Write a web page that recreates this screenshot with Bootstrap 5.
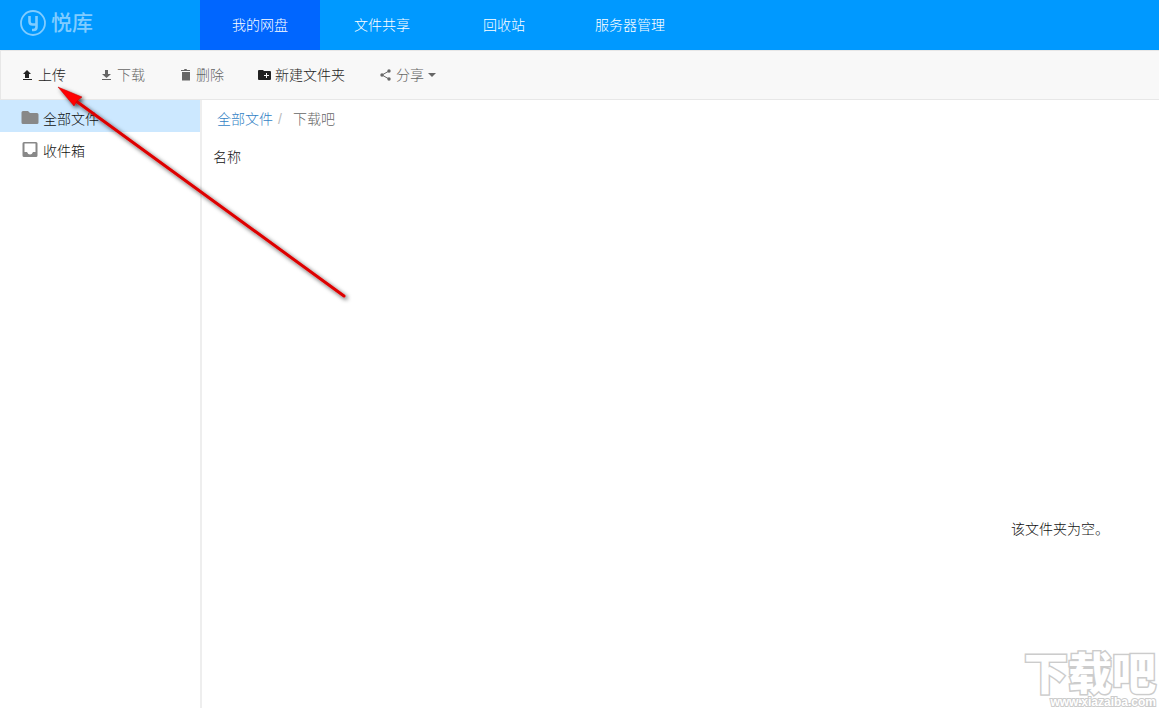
<!DOCTYPE html>
<html lang="zh-CN">
<head>
<meta charset="utf-8">
<meta name="viewport" content="width=device-width, initial-scale=1">
<title>悦库网盘</title>
<link rel="stylesheet" href="https://cdn.jsdelivr.net/npm/bootstrap@5.3.0/dist/css/bootstrap.min.css">
<style>
  body { font: 300 14px/20px "Liberation Sans", "Noto Sans CJK SC", sans-serif; color: #111; background: #fff; }
  .top-bar { background: #09f; height: 50px; }
  .side-col { width: 200px; }
  .brand { color: #80ccff; font-size: 21px; font-weight: 500; padding: 0 0 4px 19px; gap: 5px; }
  .brand:hover { color: #80ccff; }
  .top-nav { gap: 2px; }
  .top-nav .nav-link { min-width: 120px; height: 50px; padding: 15px 29px; color: #fff; text-align: center; }
  .top-nav .nav-link.active { background: #06f; }
  .tool-bar { height: 50px; background: #f8f8f8; border: 1px solid #e7e7e7; border-right: 0; padding-left: 20px; gap: 34px; }
  .tool-bar .btn { font: inherit; color: #222; border: 0; gap: 4px; line-height: 20px; }
  .tool-bar .btn.muted { color: #666; }
  .tool-bar svg { fill: currentColor; }
  .tool-bar .dropdown-toggle::after { margin-left: 0; vertical-align: 0; border-width: 4px 4px 0; }
  .side-list { border-right: 2px solid #eee; width: 202px; }
  .side-list .nav-link { height: 32px; padding: 6px 21px 0; gap: 4px; color: #111; }
  .side-list svg { margin-bottom: 2px; }
  .side-list .nav-link.active { background: #cce8ff; }
  .crumbs { padding: 9px 15px; }
  .crumbs a { color: #337fc5; }
  .crumbs .breadcrumb-item.active { color: #666; }
  .crumbs .breadcrumb-item + .breadcrumb-item { padding-left: 5px; }
  .crumbs .breadcrumb-item + .breadcrumb-item::before { color: #bbb; padding-right: 11px; }
  .file-head th { font-weight: 300; padding: 9px 11px; }
  .empty-note { padding: 0 50px 169px 0; }
  .pointer { left: 50px; top: 80px; pointer-events: none; }
  .site-mark { right: 3px; bottom: 0; color: #fff; font-weight: 900; text-align: right; pointer-events: none; -webkit-text-stroke: 3px #ccc; paint-order: stroke fill; }
  .site-mark .name { font-size: 44px; line-height: 42px; }
  .site-mark .host { font-size: 12px; line-height: 12px; -webkit-text-stroke-width: 2px; }
</style>
</head>
<body class="d-flex flex-column vh-100 overflow-hidden position-relative">
<header class="top-bar d-flex flex-shrink-0">
  <a href="#" class="brand side-col d-flex align-items-center text-decoration-none">
    <svg width="27" height="27" viewBox="0 0 27 27" fill="none" stroke="currentColor" stroke-width="1.800" aria-hidden="true">
      <circle cx="14" cy="13" r="12"/>
      <path d="M10.500 6v5.500q0 3 3 3H17M17.500 6v11q0 3-3 3H13" stroke-width="2.600"/>
    </svg>
    <span>悦库</span>
  </a>
  <nav class="nav top-nav flex-nowrap text-nowrap">
    <a class="nav-link active" href="#">我的网盘</a>
    <a class="nav-link" href="#">文件共享</a>
    <a class="nav-link" href="#">回收站</a>
    <a class="nav-link" href="#">服务器管理</a>
  </nav>
</header>

<div class="tool-bar d-flex align-items-center flex-shrink-0" role="toolbar">
  <button type="button" class="btn p-0 d-flex align-items-center">
    <svg width="13" height="12" viewBox="0 0 13 12"><path d="M6 1l4 4H8v4H4V5H2zM2 10h9v1H2z"/></svg>上传</button>
  <button type="button" class="btn p-0 d-flex align-items-center muted">
    <svg width="13" height="12" viewBox="0 0 13 12"><path d="M5 1h3v4h3L6.500 9 2 5h3zM2 10h9v1H2z"/></svg>下载</button>
  <button type="button" class="btn p-0 d-flex align-items-center muted">
    <svg width="13" height="12" viewBox="0 0 13 12"><path d="M2 1h3l.5-1h2L8 1h3v1H2zM3 3h8v8.500H3z"/></svg>删除</button>
  <button type="button" class="btn p-0 d-flex align-items-center">
    <svg width="13" height="12" viewBox="0 0 13 12"><path fill-rule="evenodd" d="M1 1h4l1 1h6q1 0 1 1v7q0 1-1 1H1q-1 0-1-1V2q0-1 1-1zM8 4v2H6v1h2v2h1V7h2V6H9V4z"/></svg>新建文件夹</button>
  <button type="button" class="btn p-0 d-flex align-items-center muted dropdown-toggle" data-bs-toggle="dropdown">
    <svg width="13" height="12" viewBox="0 0 13 12"><path d="M10 2L3 6l7 4" fill="none" stroke="currentColor"/><circle cx="10" cy="2" r="1.700"/><circle cx="3" cy="6" r="1.700"/><circle cx="10" cy="10" r="1.700"/></svg>分享</button>
</div>

<div class="d-flex flex-grow-1">
  <nav class="side-list nav flex-column flex-shrink-0">
    <a class="nav-link active d-flex align-items-center" href="#">
      <svg width="18" height="16" viewBox="0 0 18 16" fill="#888"><path d="M2 1h5l2 2h7q1.500 0 1.500 1.500v8q0 1.500-1.500 1.500H2Q.5 14 .5 12.500v-10Q.5 1 2 1z"/></svg>全部文件</a>
    <a class="nav-link d-flex align-items-center" href="#">
      <svg width="18" height="16" viewBox="0 0 18 16" fill="#888"><path fill-rule="evenodd" d="M3 0h12q1.500 0 1.500 1.500v12Q16.500 15 15 15H3q-1.500 0-1.500-1.500v-12Q1.500 0 3 0zM3.500 1.500V10h2.500q1 2.500 3 2.500t3-2.500h2.500V1.500z"/></svg>收件箱</a>
  </nav>
  <main class="d-flex flex-column flex-grow-1">
    <ol class="breadcrumb crumbs mb-0">
      <li class="breadcrumb-item"><a href="#" class="text-decoration-none">全部文件</a></li>
      <li class="breadcrumb-item active">下载吧</li>
    </ol>
    <table class="file-head w-100"><thead><tr><th scope="col">名称</th></tr></thead></table>
    <p class="empty-note mt-auto mb-0 text-end">该文件夹为空。</p>
  </main>
</div>

<svg class="pointer position-absolute" width="310" height="230" viewBox="0 0 310 230" aria-hidden="true">
  <defs><filter id="soft" x="-10%" y="-10%" width="120%" height="120%"><feDropShadow dx="2" dy="2" stdDeviation="2" flood-opacity=".7"/></filter></defs>
  <g filter="url(#soft)" fill="#f00"><path d="M26 21L294 216" stroke="#d00" stroke-width="3" stroke-linecap="round"/><path d="M8 7l24 10-5 4-3 5z" stroke="#b00" stroke-width=".5"/></g>
</svg>
<div class="site-mark position-absolute"><div class="name">下载吧</div><div class="host">www.xiazaiba.com</div></div>
<script src="https://cdn.jsdelivr.net/npm/bootstrap@5.3.0/dist/js/bootstrap.bundle.min.js"></script>
</body>
</html>
